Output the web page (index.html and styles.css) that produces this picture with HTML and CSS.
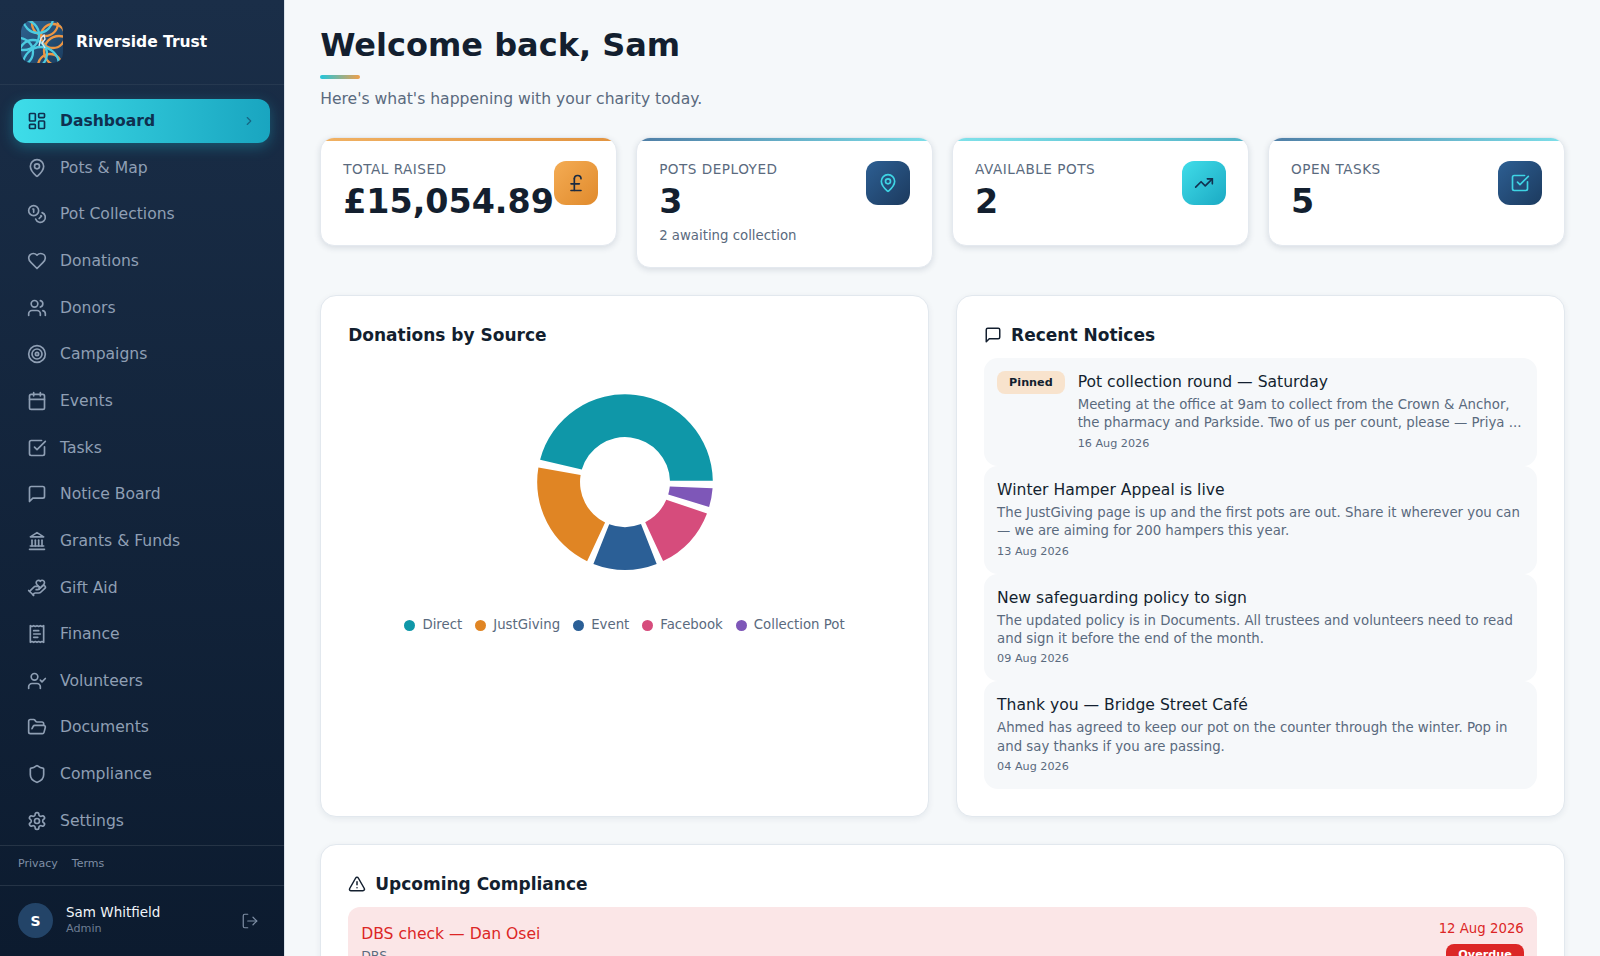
FILE: index.html
```html
<!DOCTYPE html>
<html lang="en">
<head>
    <meta charset="UTF-8">
    <meta name="viewport" content="width=device-width, initial-scale=1.0">
    <title>Riverside Trust - Dashboard</title>
    <link rel="stylesheet" href="styles.css">
</head>
<body>
    <svg class="sprite" width="0" height="0" aria-hidden="true">
        <symbol id="i-dashboard" viewBox="0 0 24 24"><rect x="3" y="3" width="7" height="9" rx="1"/><rect x="14" y="3" width="7" height="5" rx="1"/><rect x="14" y="12" width="7" height="9" rx="1"/><rect x="3" y="16" width="7" height="5" rx="1"/></symbol>
        <symbol id="i-pin" viewBox="0 0 24 24"><path d="M20 10c0 4.993-5.539 10.193-7.399 11.799a1 1 0 0 1-1.202 0C9.539 20.193 4 14.993 4 10a8 8 0 0 1 16 0"/><circle cx="12" cy="10" r="3"/></symbol>
        <symbol id="i-coins" viewBox="0 0 24 24"><circle cx="8" cy="8" r="6"/><path d="M18.09 10.37A6 6 0 1 1 10.34 18"/><path d="M7 6h1v4"/><path d="m16.71 13.88.7.71-2.82 2.82"/></symbol>
        <symbol id="i-heart" viewBox="0 0 24 24"><path d="M19 14c1.49-1.46 3-3.21 3-5.5A5.5 5.5 0 0 0 16.5 3c-1.76 0-3 .5-4.5 2-1.5-1.5-2.74-2-4.5-2A5.5 5.5 0 0 0 2 8.5c0 2.3 1.5 4.05 3 5.5l7 7Z"/></symbol>
        <symbol id="i-users" viewBox="0 0 24 24"><path d="M16 21v-2a4 4 0 0 0-4-4H6a4 4 0 0 0-4 4v2"/><circle cx="9" cy="7" r="4"/><path d="M22 21v-2a4 4 0 0 0-3-3.87"/><path d="M16 3.13a4 4 0 0 1 0 7.75"/></symbol>
        <symbol id="i-target" viewBox="0 0 24 24"><circle cx="12" cy="12" r="10"/><circle cx="12" cy="12" r="6"/><circle cx="12" cy="12" r="2"/></symbol>
        <symbol id="i-calendar" viewBox="0 0 24 24"><path d="M8 2v4"/><path d="M16 2v4"/><rect x="3" y="4" width="18" height="18" rx="2"/><path d="M3 10h18"/></symbol>
        <symbol id="i-check" viewBox="0 0 24 24"><path d="M21 10.5V19a2 2 0 0 1-2 2H5a2 2 0 0 1-2-2V5a2 2 0 0 1 2-2h12.5"/><path d="m9 11 3 3L22 4"/></symbol>
        <symbol id="i-message" viewBox="0 0 24 24"><path d="M21 15a2 2 0 0 1-2 2H7l-4 4V5a2 2 0 0 1 2-2h14a2 2 0 0 1 2 2z"/></symbol>
        <symbol id="i-landmark" viewBox="0 0 24 24"><path d="M3 22h18"/><path d="M6 18v-7"/><path d="M10 18v-7"/><path d="M14 18v-7"/><path d="M18 18v-7"/><path d="M12 2l8 5H4z"/><path d="M4 18h16"/></symbol>
        <symbol id="i-hand" viewBox="0 0 24 24"><path d="M11 14h2a2 2 0 1 0 0-4h-3c-.6 0-1.1.2-1.4.6L3 16"/><path d="m7 20 1.6-1.4c.3-.4.8-.6 1.4-.6h4c1.1 0 2.1-.4 2.8-1.2l4.6-4.4a2 2 0 0 0-2.75-2.91l-4.2 3.9"/><path d="m2 15 6 6"/><path d="M19.5 8.5c.7-.7 1.5-1.6 1.5-2.7A2.73 2.73 0 0 0 16 4a2.78 2.78 0 0 0-5 1.8c0 1.2.8 2 1.5 2.8L16 12Z"/></symbol>
        <symbol id="i-receipt" viewBox="0 0 24 24"><path d="M4 2v20l2-1 2 1 2-1 2 1 2-1 2 1 2-1 2 1V2l-2 1-2-1-2 1-2-1-2 1-2-1-2 1Z"/><path d="M14 8H8"/><path d="M16 12H8"/><path d="M13 16H8"/></symbol>
        <symbol id="i-usercheck" viewBox="0 0 24 24"><path d="M16 21v-2a4 4 0 0 0-4-4H6a4 4 0 0 0-4 4v2"/><circle cx="9" cy="7" r="4"/><path d="m16 11 2 2 4-4"/></symbol>
        <symbol id="i-folder" viewBox="0 0 24 24"><path d="m6 14 1.5-2.9A2 2 0 0 1 9.24 10H20a2 2 0 0 1 1.94 2.5l-1.54 6a2 2 0 0 1-1.95 1.5H4a2 2 0 0 1-2-2V5a2 2 0 0 1 2-2h3.9a2 2 0 0 1 1.69.9l.81 1.2a2 2 0 0 0 1.67.9H18a2 2 0 0 1 2 2v2"/></symbol>
        <symbol id="i-shield" viewBox="0 0 24 24"><path d="M20 13c0 5-3.5 7.5-7.66 8.95a1 1 0 0 1-.67-.01C7.5 20.5 4 18 4 13V6a1 1 0 0 1 1-1c2 0 4.5-1.2 6.24-2.72a1.17 1.17 0 0 1 1.52 0C14.51 3.81 17 5 19 5a1 1 0 0 1 1 1z"/></symbol>
        <symbol id="i-settings" viewBox="0 0 24 24"><path d="M12.22 2h-.44a2 2 0 0 0-2 2v.18a2 2 0 0 1-1 1.73l-.43.25a2 2 0 0 1-2 0l-.15-.08a2 2 0 0 0-2.73.73l-.22.38a2 2 0 0 0 .73 2.73l.15.1a2 2 0 0 1 1 1.72v.51a2 2 0 0 1-1 1.74l-.15.09a2 2 0 0 0-.73 2.73l.22.38a2 2 0 0 0 2.73.73l.15-.08a2 2 0 0 1 2 0l.43.25a2 2 0 0 1 1 1.73V20a2 2 0 0 0 2 2h.44a2 2 0 0 0 2-2v-.18a2 2 0 0 1 1-1.73l.43-.25a2 2 0 0 1 2 0l.15.08a2 2 0 0 0 2.73-.73l.22-.39a2 2 0 0 0-.73-2.73l-.15-.08a2 2 0 0 1-1-1.74v-.5a2 2 0 0 1 1-1.74l.15-.09a2 2 0 0 0 .73-2.73l-.22-.38a2 2 0 0 0-2.73-.73l-.15.08a2 2 0 0 1-2 0l-.43-.25a2 2 0 0 1-1-1.73V4a2 2 0 0 0-2-2z"/><circle cx="12" cy="12" r="3"/></symbol>
        <symbol id="i-logout" viewBox="0 0 24 24"><path d="M9 21H5a2 2 0 0 1-2-2V5a2 2 0 0 1 2-2h4"/><path d="m16 17 5-5-5-5"/><path d="M21 12H9"/></symbol>
        <symbol id="i-chevron" viewBox="0 0 24 24"><path d="m9 18 6-6-6-6"/></symbol>
        <symbol id="i-trend" viewBox="0 0 24 24"><path d="m22 7-8.5 8.5-5-5L2 17"/><path d="M16 7h6v6"/></symbol>
        <symbol id="i-pound" viewBox="0 0 24 24"><path d="M18 7c0-5.333-8-5.333-8 0"/><path d="M10 7v14"/><path d="M6 21h12"/><path d="M6 13h10"/></symbol>
        <symbol id="i-alert" viewBox="0 0 24 24"><path d="m21.73 18-8-14a2 2 0 0 0-3.48 0l-8 14A2 2 0 0 0 4 21h16a2 2 0 0 0 1.73-3"/><path d="M12 9v4"/><path d="M12 17h.01"/></symbol>
    </svg>

    <div class="app">
        <aside class="sidebar">
            <div class="brand">
                <svg class="brand-logo" viewBox="0 0 42 42">
                    <defs>
                        <clipPath id="logo-clip"><rect width="42" height="42" rx="10"/></clipPath>
                        <linearGradient id="logo-bg" x1="0" y1="0" x2="1" y2="1"><stop offset="0" stop-color="#2f6390"/><stop offset="1" stop-color="#1b3d60"/></linearGradient>
                    </defs>
                    <g clip-path="url(#logo-clip)" fill="none" stroke-width="2.3">
                        <rect width="42" height="42" fill="url(#logo-bg)"/>
                        <circle cx="32" cy="15" r="12" stroke="#ee9642"/>
                        <circle cx="38" cy="30" r="15" stroke="#ee9642"/>
                        <circle cx="24" cy="2" r="13" stroke="#ee9642"/>
                        <circle cx="29" cy="45" r="12" stroke="#ee9642"/>
                        <circle cx="3" cy="14" r="15" stroke="#4ccbe0"/>
                        <circle cx="12" cy="33" r="14" stroke="#4ccbe0"/>
                        <circle cx="-2" cy="31" r="14" stroke="#4ccbe0"/>
                        <circle cx="20" cy="44" r="18" stroke="#4ccbe0"/>
                        <circle cx="17" cy="-3" r="15" stroke="#4ccbe0"/>
                        <path d="M18 25l2-8 3-3 1 4-3 4 3 5" stroke="#dfe8ef" stroke-width="1.4"/>
                    </g>
                </svg>
                <span class="brand-name">Riverside Trust</span>
            </div>

            <nav class="nav">
                <a class="nav-item active" href="#"><svg class="icon"><use href="#i-dashboard"/></svg><span>Dashboard</span><svg class="nav-chevron"><use href="#i-chevron"/></svg></a>
                <a class="nav-item" href="#"><svg class="icon"><use href="#i-pin"/></svg><span>Pots &amp; Map</span></a>
                <a class="nav-item" href="#"><svg class="icon"><use href="#i-coins"/></svg><span>Pot Collections</span></a>
                <a class="nav-item" href="#"><svg class="icon"><use href="#i-heart"/></svg><span>Donations</span></a>
                <a class="nav-item" href="#"><svg class="icon"><use href="#i-users"/></svg><span>Donors</span></a>
                <a class="nav-item" href="#"><svg class="icon"><use href="#i-target"/></svg><span>Campaigns</span></a>
                <a class="nav-item" href="#"><svg class="icon"><use href="#i-calendar"/></svg><span>Events</span></a>
                <a class="nav-item" href="#"><svg class="icon"><use href="#i-check"/></svg><span>Tasks</span></a>
                <a class="nav-item" href="#"><svg class="icon"><use href="#i-message"/></svg><span>Notice Board</span></a>
                <a class="nav-item" href="#"><svg class="icon"><use href="#i-landmark"/></svg><span>Grants &amp; Funds</span></a>
                <a class="nav-item" href="#"><svg class="icon"><use href="#i-hand"/></svg><span>Gift Aid</span></a>
                <a class="nav-item" href="#"><svg class="icon"><use href="#i-receipt"/></svg><span>Finance</span></a>
                <a class="nav-item" href="#"><svg class="icon"><use href="#i-usercheck"/></svg><span>Volunteers</span></a>
                <a class="nav-item" href="#"><svg class="icon"><use href="#i-folder"/></svg><span>Documents</span></a>
                <a class="nav-item" href="#"><svg class="icon"><use href="#i-shield"/></svg><span>Compliance</span></a>
                <a class="nav-item" href="#"><svg class="icon"><use href="#i-settings"/></svg><span>Settings</span></a>
            </nav>

            <div class="legal">
                <a href="#">Privacy</a>
                <a href="#">Terms</a>
            </div>

            <div class="user">
                <div class="avatar">S</div>
                <div class="user-info">
                    <div class="user-name">Sam Whitfield</div>
                    <div class="user-role">Admin</div>
                </div>
                <svg class="icon user-logout"><use href="#i-logout"/></svg>
            </div>
        </aside>

        <main class="main">
            <h1 class="page-title">Welcome back, Sam</h1>
            <div class="title-rule"></div>
            <p class="page-subtitle">Here's what's happening with your charity today.</p>

            <section class="stats">
                <div class="stat-card bar-orange">
                    <div class="stat-body">
                        <div class="stat-label">TOTAL RAISED</div>
                        <div class="stat-value">£15,054.89</div>
                    </div>
                    <div class="stat-icon tile-orange"><svg class="icon"><use href="#i-pound"/></svg></div>
                </div>
                <div class="stat-card bar-navy">
                    <div class="stat-body">
                        <div class="stat-label">POTS DEPLOYED</div>
                        <div class="stat-value">3</div>
                        <div class="stat-note">2 awaiting collection</div>
                    </div>
                    <div class="stat-icon tile-navy"><svg class="icon"><use href="#i-pin"/></svg></div>
                </div>
                <div class="stat-card bar-teal">
                    <div class="stat-body">
                        <div class="stat-label">AVAILABLE POTS</div>
                        <div class="stat-value">2</div>
                    </div>
                    <div class="stat-icon tile-teal"><svg class="icon"><use href="#i-trend"/></svg></div>
                </div>
                <div class="stat-card bar-navy">
                    <div class="stat-body">
                        <div class="stat-label">OPEN TASKS</div>
                        <div class="stat-value">5</div>
                    </div>
                    <div class="stat-icon tile-navy"><svg class="icon"><use href="#i-check"/></svg></div>
                </div>
            </section>

            <section class="panels">
                <div class="card">
                    <h2 class="card-title">Donations by Source</h2>
                    <div class="chart">
                        <svg class="donut" viewBox="-90 -90 180 180">
                            <path fill="#0f97a8" d="M87.8 -1.2A87.8 87.8 0 0 0 -84.9 -22.3L-43.2 -12.5A45 45 0 0 1 44.98 -1.2Z"/>
                            <path fill="#e08524" d="M-86.6 -14.6A87.8 87.8 0 0 0 -37.9 79.2L-19.9 40.4A45 45 0 0 1 -44.4 -7.1Z"/>
                            <path fill="#2b5f96" d="M-31.6 81.9A87.8 87.8 0 0 0 31.7 81.9L16 42.1A45 45 0 0 1 -15.8 42.2Z"/>
                            <path fill="#d64c7c" d="M38.1 79.1A87.8 87.8 0 0 0 82 31.4L41.3 17.8A45 45 0 0 1 20.2 40.2Z"/>
                            <path fill="#7e57b8" d="M84.1 24.9A87.8 87.8 0 0 0 87.6 6.2L44.8 4.6A45 45 0 0 1 43.2 12.6Z"/>
                        </svg>
                        <ul class="legend">
                            <li><span class="dot dot-direct"></span>Direct</li>
                            <li><span class="dot dot-justgiving"></span>JustGiving</li>
                            <li><span class="dot dot-event"></span>Event</li>
                            <li><span class="dot dot-facebook"></span>Facebook</li>
                            <li><span class="dot dot-pot"></span>Collection Pot</li>
                        </ul>
                    </div>
                </div>

                <div class="card">
                    <h2 class="card-title"><svg class="icon title-icon"><use href="#i-message"/></svg>Recent Notices</h2>
                    <div class="notices">
                        <article class="notice">
                            <span class="pill-pinned">Pinned</span>
                            <div class="notice-body">
                                <h3 class="notice-title">Pot collection round — Saturday</h3>
                                <p class="notice-text">Meeting at the office at 9am to collect from the Crown &amp; Anchor, the pharmacy and Parkside. Two of us per count, please — Priya ...</p>
                                <div class="notice-date">16 Aug 2026</div>
                            </div>
                        </article>
                        <article class="notice">
                            <div class="notice-body">
                                <h3 class="notice-title">Winter Hamper Appeal is live</h3>
                                <p class="notice-text">The JustGiving page is up and the first pots are out. Share it wherever you can — we are aiming for 200 hampers this year.</p>
                                <div class="notice-date">13 Aug 2026</div>
                            </div>
                        </article>
                        <article class="notice">
                            <div class="notice-body">
                                <h3 class="notice-title">New safeguarding policy to sign</h3>
                                <p class="notice-text">The updated policy is in Documents. All trustees and volunteers need to read and sign it before the end of the month.</p>
                                <div class="notice-date">09 Aug 2026</div>
                            </div>
                        </article>
                        <article class="notice">
                            <div class="notice-body">
                                <h3 class="notice-title">Thank you — Bridge Street Café</h3>
                                <p class="notice-text">Ahmed has agreed to keep our pot on the counter through the winter. Pop in and say thanks if you are passing.</p>
                                <div class="notice-date">04 Aug 2026</div>
                            </div>
                        </article>
                    </div>
                </div>
            </section>

            <section class="card compliance">
                <h2 class="card-title"><svg class="icon title-icon"><use href="#i-alert"/></svg>Upcoming Compliance</h2>
                <div class="compliance-row">
                    <div>
                        <div class="compliance-name">DBS check — Dan Osei</div>
                        <div class="compliance-type">DBS</div>
                    </div>
                    <div class="compliance-side">
                        <div class="compliance-date">12 Aug 2026</div>
                        <span class="pill-overdue">Overdue</span>
                    </div>
                </div>
            </section>
        </main>
    </div>
</body>
</html>
```

FILE: styles.css
```css
* {
    box-sizing: border-box;
}

html,
body {
    height: 100%;
    margin: 0;
}

body {
    font-family: "DejaVu Sans", sans-serif;
    background-color: #f5f8fa;
    color: #131f2f;
    overflow: hidden;
}

a {
    color: inherit;
    text-decoration: none;
}

.sprite {
    position: absolute;
}

.icon {
    width: 20px;
    height: 20px;
    flex-shrink: 0;
    fill: none;
    stroke: currentColor;
    stroke-width: 2;
    stroke-linecap: round;
    stroke-linejoin: round;
}

.app {
    display: flex;
    height: 100vh;
}

/* sidebar */
.sidebar {
    width: 285px;
    flex-shrink: 0;
    display: flex;
    flex-direction: column;
    background: linear-gradient(180deg, #1a2e48 0%, #0c1b2f 100%);
    border-right: 1px solid #dbe3ea;
}

.brand {
    display: flex;
    align-items: center;
    gap: 13px;
    height: 86px;
    padding: 0 21px;
    border-bottom: 1px solid rgba(255, 255, 255, 0.06);
}

.brand-logo {
    width: 42px;
    height: 42px;
    flex-shrink: 0;
}

.brand-name {
    color: #fff;
    font-size: 15.5px;
    font-weight: 700;
}

.nav {
    flex: 1;
    padding: 13.5px 14px 0 13px;
}

.nav-item {
    display: flex;
    align-items: center;
    gap: 13px;
    height: 44.67px;
    margin-bottom: 2px;
    padding: 0 14px;
    border-radius: 12px;
    color: #8f9fb4;
    font-size: 15.6px;
}

.nav-item.active {
    background: linear-gradient(90deg, #3edde9 0%, #19a5c0 100%);
    box-shadow: 0 4px 14px rgba(34, 200, 225, 0.3);
    color: #0f3050;
    font-weight: 700;
}

.nav-chevron {
    width: 14px;
    height: 14px;
    margin-left: auto;
    fill: none;
    stroke: currentColor;
    stroke-width: 2;
    stroke-linecap: round;
    stroke-linejoin: round;
    opacity: 0.55;
}

.legal {
    display: flex;
    gap: 14px;
    height: 41px;
    align-items: center;
    padding: 0 18px 3px;
    border-top: 1px solid rgba(255, 255, 255, 0.1);
    border-bottom: 1px solid rgba(255, 255, 255, 0.1);
    color: #7f8fa5;
    font-size: 11px;
}

.user {
    display: flex;
    align-items: center;
    gap: 13px;
    height: 71px;
    padding: 0 25px 0 18px;
}

.avatar {
    width: 35px;
    height: 35px;
    border-radius: 50%;
    background-color: #234468;
    color: #fff;
    font-size: 14px;
    font-weight: 700;
    display: flex;
    align-items: center;
    justify-content: center;
}

.user-info {
    flex: 1;
    padding-bottom: 2px;
}

.user-name {
    color: #f1f5f9;
    font-size: 13.5px;
    line-height: 18px;
}

.user-role {
    color: #6d7d93;
    font-size: 11.2px;
    line-height: 15px;
}

.user-logout {
    width: 18px;
    height: 18px;
    color: #7f8fa5;
    stroke-width: 1.6;
}

/* main */
.main {
    flex: 1;
    min-width: 0;
    padding: 23px 35.2px 0;
    overflow: hidden;
}

.page-title {
    margin: 0;
    font-size: 32px;
    line-height: 45px;
    font-weight: 700;
    color: #131f2f;
}

.title-rule {
    width: 40px;
    height: 4px;
    margin-top: 7px;
    border-radius: 2px;
    background: linear-gradient(90deg, #22c6dc 0%, #f0a04b 100%);
}

.page-subtitle {
    margin: 10px 0 0;
    font-size: 15.6px;
    line-height: 20px;
    color: #5a6a7e;
}

.stats {
    display: grid;
    grid-template-columns: repeat(4, 1fr);
    gap: 19.2px;
    align-items: start;
    margin-top: 28px;
}

.stat-card {
    position: relative;
    display: flex;
    justify-content: space-between;
    padding: 22px;
    border: 1px solid #e4e9ef;
    border-radius: 14px;
    background-color: #fff;
    box-shadow: 0 2px 6px rgba(20, 40, 70, 0.13);
    overflow: hidden;
}

.stat-card::before {
    content: "";
    position: absolute;
    top: 0;
    left: 0;
    right: 0;
    height: 3px;
}

.bar-orange::before {
    background: linear-gradient(90deg, #f0b163, #e29440);
}

.bar-navy::before {
    background: linear-gradient(90deg, #4f7ea6, #7ddfe9);
}

.bar-teal::before {
    background: linear-gradient(90deg, #7fe2ea, #55b4c8);
}

.stat-label {
    font-size: 13.6px;
    line-height: 18px;
    letter-spacing: 0.5px;
    color: #5a6a7e;
}

.stat-value {
    margin-top: 3px;
    font-size: 33.3px;
    line-height: 42px;
    font-weight: 700;
    white-space: nowrap;
    color: #131f2f;
}

.stat-note {
    margin-top: 3px;
    font-size: 13.3px;
    line-height: 19px;
    color: #5a6a7e;
}

.stat-icon {
    width: 44px;
    height: 44px;
    margin-top: 1px;
    flex-shrink: 0;
    display: flex;
    align-items: center;
    justify-content: center;
    border-radius: 12px;
}

.tile-orange {
    background: linear-gradient(135deg, #f4ac54, #e08a2c);
    color: #1a2b42;
}

.tile-navy {
    background: linear-gradient(135deg, #2d5f93, #1c3a5e);
    color: #3ed4e4;
}

.tile-teal {
    background: linear-gradient(135deg, #40dde9, #1ba9c3);
    color: #123250;
}

.panels {
    display: grid;
    grid-template-columns: 1fr 1fr;
    gap: 27.2px;
    margin-top: 27px;
}

.card {
    padding: 27px;
    border: 1px solid #e2e8ee;
    border-radius: 16px;
    background-color: #fff;
    box-shadow: 0 2px 6px rgba(20, 40, 70, 0.07);
}

.card-title {
    display: flex;
    align-items: center;
    gap: 9px;
    margin: 0;
    font-size: 17px;
    line-height: 24px;
    font-weight: 700;
    color: #131f2f;
}

.title-icon {
    width: 18px;
    height: 18px;
}

.chart {
    display: flex;
    flex-direction: column;
    align-items: center;
    margin-top: 45px;
}

.donut {
    width: 180px;
    height: 180px;
}

.legend {
    display: flex;
    gap: 13px;
    margin: 44px 0 0;
    padding: 0;
    list-style: none;
    font-size: 13.3px;
    line-height: 18px;
    color: #5a6a7e;
}

.legend li {
    display: flex;
    align-items: center;
    gap: 7px;
}

.dot {
    width: 11px;
    height: 11px;
    border-radius: 50%;
}

.dot-direct { background-color: #0f97a8; }
.dot-justgiving { background-color: #e08524; }
.dot-event { background-color: #2b5f96; }
.dot-facebook { background-color: #d64c7c; }
.dot-pot { background-color: #7e57b8; }

.notices {
    margin-top: 11px;
}

.notice {
    display: flex;
    gap: 13px;
    height: 107.75px;
    padding: 13px;
    border-radius: 14px;
    background-color: #f6f8fa;
}

.pill-pinned {
    flex-shrink: 0;
    align-self: flex-start;
    padding: 0 12px;
    height: 23px;
    line-height: 23px;
    border-radius: 8px;
    background-color: #f8e3cd;
    font-size: 11.2px;
    font-weight: 700;
    color: #131f2f;
}

.notice-title {
    margin: 0;
    font-size: 15.6px;
    line-height: 22px;
    font-weight: 400;
    color: #131f2f;
}

.notice-text {
    margin: 3px 0 0;
    font-size: 13.3px;
    line-height: 18.4px;
    color: #5a6a7e;
}

.notice-date {
    margin-top: 2px;
    font-size: 11.2px;
    line-height: 18px;
    color: #5a6a7e;
}

.compliance {
    margin-top: 27px;
}

.compliance-row {
    display: flex;
    justify-content: space-between;
    margin-top: 11px;
    padding: 13px;
    border-radius: 12px;
    background-color: #fbe6e7;
}

.compliance-name {
    font-size: 15.6px;
    line-height: 28px;
    color: #dc2626;
}

.compliance-type {
    font-size: 12.5px;
    line-height: 15px;
    color: #5a6a7e;
}

.compliance-side {
    display: flex;
    flex-direction: column;
    align-items: flex-end;
    gap: 6px;
}

.compliance-date {
    font-size: 13.3px;
    line-height: 18px;
    color: #dc2626;
}

.pill-overdue {
    padding: 0 12px;
    height: 22px;
    line-height: 22px;
    border-radius: 8px;
    background-color: #dc2626;
    color: #fff;
    font-size: 11.2px;
    font-weight: 700;
}
```
